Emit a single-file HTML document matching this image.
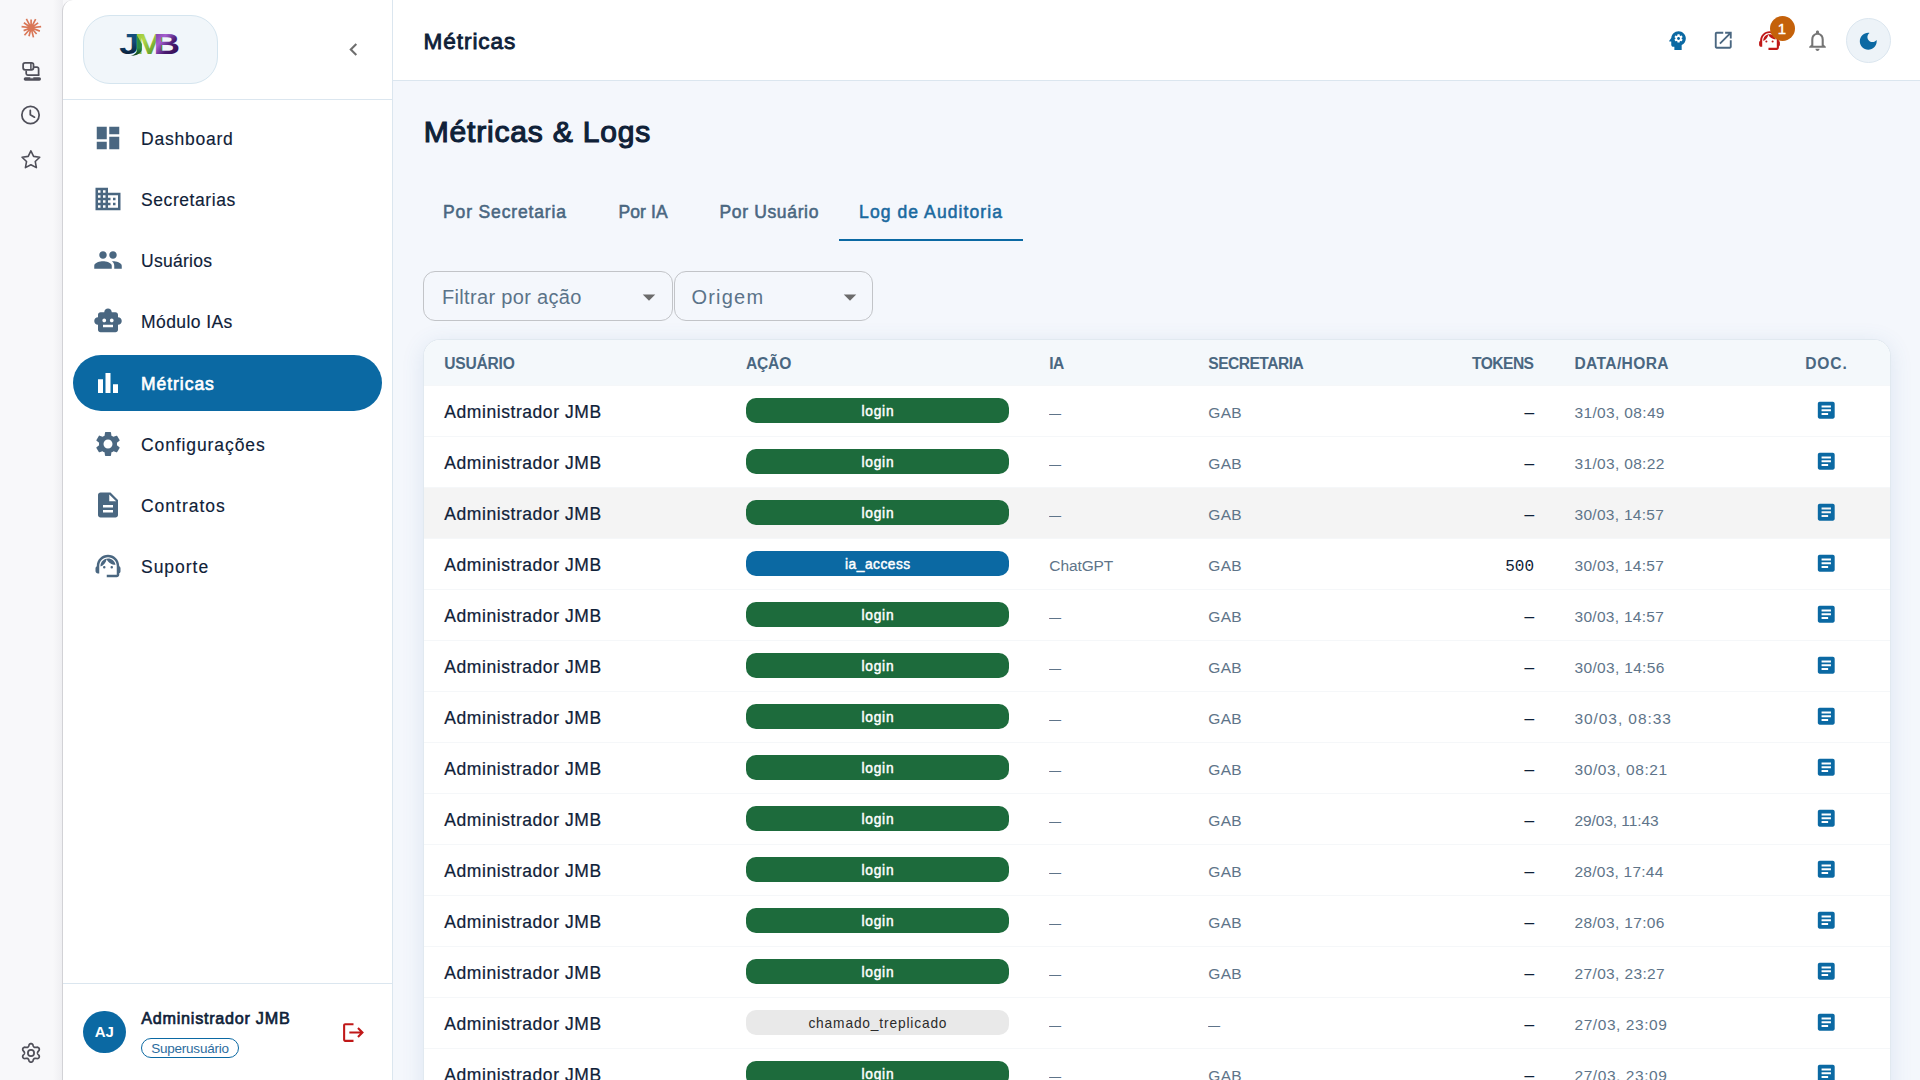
<!DOCTYPE html>
<html lang="pt-BR">
<head>
<meta charset="utf-8">
<title>Métricas</title>
<style>
*{box-sizing:border-box;margin:0;padding:0}
html,body{width:1920px;height:1080px;overflow:hidden;background:#f8f8fa;font-family:"Liberation Sans",sans-serif;color:#0f2138}
.ic{display:block;flex:none}
/* far-left strip */
#strip{position:absolute;left:0;top:0;width:63px;height:1080px;background:linear-gradient(90deg,#f8f8fa 0,#f8f8fa 53px,#efeff2 62px)}
#strip .si{position:absolute}
/* sidebar */
#side{position:absolute;left:62px;top:0;width:331px;height:1080px;background:#fff;border-left:1px solid #d2d2d6;border-right:1px solid #dbe6ef;border-top-left-radius:11px}
#shead{position:absolute;left:0;top:0;right:0;height:100px;border-bottom:1px solid #dbe6ef}
#logo{position:absolute;left:20px;top:15px;width:135px;height:68.500px;border-radius:27px;background:#f1f6fa;border:1px solid #d5e5ef}
#chev{position:absolute;left:278.100px;top:37px}
#nav{position:absolute;left:10px;top:0;width:309px}
.ni{position:absolute;left:0;width:309px;height:56px;border-radius:28px;display:flex;align-items:center;padding-left:20px;font-size:17.500px;color:#0f2138}
.ni span{margin-left:18px;position:relative;top:1.100px;-webkit-text-stroke:.15px currentColor}
.ni.act{background:#0b69a3;color:#fff}
.ni.act span{-webkit-text-stroke:.65px #fff}
#sfoot{position:absolute;left:0;right:0;top:983px;height:97px;border-top:1px solid #dbe6ef}
#avatar{position:absolute;left:20px;top:26.600px;width:42.500px;height:42.500px;border-radius:50%;background:#0b69a3;color:#fff;font-weight:700;font-size:15px;display:flex;align-items:center;justify-content:center}
#uname{position:absolute;left:78.300px;top:24px;font-size:16.200px;line-height:20px;font-weight:400;-webkit-text-stroke:.65px #0f2138;letter-spacing:.73px;color:#0f2138;white-space:nowrap}
#ubadge{position:absolute;left:78px;top:54px;height:20px;width:98px;border:1px solid #0b69a3;border-radius:10px;color:#2b6c9e;font-size:13.500px;line-height:19px;text-align:center;letter-spacing:-.23px}
#logout{position:absolute;left:278px;top:35.800px}
/* top bar */
#top{position:absolute;left:393px;top:0;width:1527px;height:81px;background:#fff;border-bottom:1px solid #dbe6ef}
#top h2{position:absolute;left:30.400px;top:26.700px;font-size:22.600px;line-height:30px;font-weight:400;-webkit-text-stroke:.85px #0f2138;color:#0f2138;letter-spacing:.95px}
#top .ti{position:absolute}
#moon{position:absolute;left:1453px;top:18.300px;width:45px;height:45px;border-radius:50%;background:#edf3f8;border:1px solid #dbe6ef;display:flex;align-items:center;justify-content:center}
#badge{position:absolute;left:1377px;top:16px;width:25px;height:25px;border-radius:50%;background:#c4610a;color:#fff;font-size:15px;line-height:26px;text-align:center;-webkit-text-stroke:.4px #fff;text-indent:-1px}
/* main */
#main{position:absolute;left:393px;top:81px;width:1527px;height:999px;background:#f4f7fc;overflow:hidden}
h1{position:absolute;left:30.700px;top:30.600px;font-size:30px;line-height:40px;font-weight:400;-webkit-text-stroke:1.150px #0f2138;color:#0f2138;white-space:nowrap;letter-spacing:.82px}
#tabs{position:absolute;left:30px;top:100px;height:60px;display:flex}
.tab{height:60px;padding:0 20px;min-width:112.500px;display:flex;align-items:center;justify-content:center;font-size:17.500px;font-weight:400;-webkit-text-stroke:.55px currentColor;color:#4a6781;white-space:nowrap;border-bottom:2.500px solid transparent}
#t1{letter-spacing:.86px}#t2{letter-spacing:.15px}#t3{letter-spacing:.66px}#t4{letter-spacing:1.09px}
.tab span{position:relative;top:2px}
.tab.on{color:#1b6a9f;border-bottom-color:#0b69a3}
.sel{position:absolute;top:190px;height:50px;border:1px solid #c2c4c8;border-radius:12px;font-size:20px;color:#5b7389;display:flex;align-items:center;padding-left:18px;letter-spacing:.33px}
.sel svg{position:absolute;right:7.300px;top:9.500px}
.sel span{position:relative;top:1.300px}
#card{position:absolute;left:30px;top:258px;width:1468px;height:760px;background:#fff;border:1px solid #e1e9f0;border-radius:17px 17px 0 0;box-shadow:0 4px 22px rgba(60,110,170,.13);overflow:hidden}
.th,.tr{display:flex;align-items:center;position:relative}
.th{height:45px;background:#f4f8fb;font-size:15.600px;font-weight:700;color:#4a6781}
.tr{height:51px;border-top:1px solid #f5f7f9;font-size:15.500px;color:#5e7489;letter-spacing:.3px}
.tr.hov{background:#f4f4f4}
.th>div,.tr>div{position:absolute;white-space:nowrap}
.c1{left:20.300px}.c2{left:322px}.c3{left:625.300px}.c4{left:784.300px}.c5{right:356px;text-align:right}.c6{left:1150.500px}.c7{left:1381px;width:42px;text-align:center;display:flex;justify-content:center}
.tr .c2{transform:translateY(-1px)}.tr .c7{transform:translateY(-1px)}.tr .c3,.tr .c4,.tr .c6{transform:translateY(2.300px)}.tr .c5{transform:translateY(2.600px)}.th>div{transform:translateY(1px)}
.tr .c1{transform:translateY(.6px);font-size:17.500px;color:#0f2138;font-weight:400;-webkit-text-stroke:.22px #0f2138;letter-spacing:.56px}
.tr .tok{color:#0f2138;font-family:"Liberation Mono",monospace;font-size:16px;letter-spacing:0}
.d{display:inline-block;transform:scaleX(.78);transform-origin:left center;position:relative;top:0px}
.chip{display:block;width:263px;height:25px;border-radius:10px;text-align:center;font-size:13.750px;line-height:27px;font-weight:400;-webkit-text-stroke:.45px #fff;color:#fff;letter-spacing:.78px;text-indent:.78px}
.chip.g{background:#1d6b3c}.chip.b{background:#0b69a3;letter-spacing:.5px}.chip.n{background:#e9e9e9;color:#2b2b2b;-webkit-text-stroke:0;letter-spacing:.84px}
</style>
</head>
<body>
<div id="strip">
<svg id="stripsvg" width="63" height="1080" viewBox="0 0 63 1080" fill="none" stroke-linecap="round" stroke-linejoin="round">
<path d="M31.10 27.80L41.13 26.59M31.10 27.80L38.18 22.92M31.10 27.80L35.66 19.13M31.10 27.80L31.11 19.60M31.10 27.80L26.37 18.76M31.10 27.80L23.86 22.80M31.10 27.80L21.57 26.63M31.10 27.80L23.62 30.63M31.10 27.80L24.46 35.28M31.10 27.80L29.01 36.25M31.10 27.80L33.46 37.41M31.10 27.80L36.60 34.02M31.10 27.80L39.89 31.14" stroke="#d97757" stroke-width="1.65" stroke-linecap="butt"/>
<circle cx="31.1" cy="27.8" r="2.2" fill="#d97757"/>
<g stroke="#4f4f59" stroke-width="1.75">
<rect x="23.1" y="62.8" width="10.4" height="7" rx="2"/>
<path d="M30.900 63.600v5.400" stroke-width="1.500"/>
<path d="M34.300 67.100h2.700a1.600 1.600 0 0 1 1.600 1.600v6.200"/>
<path d="M26.200 71.400v2.100a1.500 1.500 0 0 0 1.500 1.500h10.900"/>
<path d="M25.400 78.950h13.900" stroke-width="3.400" stroke-linecap="round"/>
<path d="M30.300 77.700h3" stroke="#f8f8fa" stroke-width="1.100" stroke-linecap="butt"/>
<circle cx="30.500" cy="115.050" r="8.650"/>
<path d="M30.300 110.400v4.400l4.200 2.400"/>
<path d="M30.90 150.80 L28.20 156.38 L22.06 157.23 L26.53 161.52 L25.43 167.62 L30.90 164.70 L36.37 167.62 L35.27 161.52 L39.74 157.23 L33.60 156.38Z" stroke-width="1.600"/>
<path d="M37.55 1052.90 L37.58 1052.61 L37.65 1052.32 L37.78 1052.01 L37.96 1051.67 L38.20 1051.30 L38.63 1050.86 L39.03 1050.37 L39.20 1049.91 L39.28 1049.47 L39.27 1049.05 L39.18 1048.64 L39.01 1048.28 L38.77 1047.95 L38.47 1047.67 L38.11 1047.45 L37.69 1047.29 L37.21 1047.21 L36.59 1047.31 L35.98 1047.46 L35.54 1047.48 L35.16 1047.47 L34.83 1047.43 L34.54 1047.35 L34.27 1047.23 L34.04 1047.06 L33.82 1046.85 L33.62 1046.58 L33.42 1046.26 L33.22 1045.87 L33.04 1045.27 L32.82 1044.68 L32.52 1044.30 L32.17 1044.02 L31.79 1043.81 L31.40 1043.69 L31.00 1043.65 L30.60 1043.69 L30.21 1043.81 L29.83 1044.02 L29.48 1044.30 L29.18 1044.68 L28.96 1045.27 L28.78 1045.87 L28.58 1046.26 L28.38 1046.58 L28.18 1046.85 L27.96 1047.06 L27.73 1047.23 L27.46 1047.35 L27.17 1047.43 L26.84 1047.47 L26.46 1047.48 L26.02 1047.46 L25.41 1047.31 L24.79 1047.21 L24.31 1047.29 L23.89 1047.45 L23.53 1047.67 L23.23 1047.95 L22.99 1048.28 L22.82 1048.64 L22.73 1049.05 L22.72 1049.47 L22.80 1049.91 L22.97 1050.37 L23.37 1050.86 L23.80 1051.30 L24.04 1051.67 L24.22 1052.01 L24.35 1052.32 L24.42 1052.61 L24.45 1052.90 L24.42 1053.19 L24.35 1053.48 L24.22 1053.79 L24.04 1054.13 L23.80 1054.50 L23.37 1054.94 L22.97 1055.43 L22.80 1055.89 L22.72 1056.33 L22.73 1056.75 L22.82 1057.16 L22.99 1057.53 L23.23 1057.85 L23.53 1058.13 L23.89 1058.35 L24.31 1058.51 L24.79 1058.59 L25.41 1058.49 L26.02 1058.34 L26.46 1058.32 L26.84 1058.33 L27.17 1058.37 L27.46 1058.45 L27.72 1058.57 L27.96 1058.74 L28.18 1058.95 L28.38 1059.22 L28.58 1059.54 L28.78 1059.93 L28.96 1060.53 L29.18 1061.12 L29.48 1061.50 L29.83 1061.78 L30.21 1061.99 L30.60 1062.11 L31.00 1062.15 L31.40 1062.11 L31.79 1061.99 L32.17 1061.78 L32.52 1061.50 L32.82 1061.12 L33.04 1060.53 L33.22 1059.93 L33.42 1059.54 L33.62 1059.22 L33.82 1058.95 L34.04 1058.74 L34.27 1058.57 L34.54 1058.45 L34.83 1058.37 L35.16 1058.33 L35.54 1058.32 L35.98 1058.34 L36.59 1058.49 L37.21 1058.59 L37.69 1058.51 L38.11 1058.35 L38.47 1058.13 L38.77 1057.85 L39.01 1057.53 L39.18 1057.16 L39.27 1056.75 L39.28 1056.33 L39.20 1055.89 L39.03 1055.43 L38.63 1054.94 L38.20 1054.50 L37.96 1054.13 L37.78 1053.79 L37.65 1053.48 L37.58 1053.19Z"/>
<circle cx="31" cy="1052.900" r="3.100"/>
</g>
</svg>
</div>
<div id="side">
  <div id="shead">
    <div id="logo">
      <svg width="133" height="66" viewBox="0 0 133 66" style="display:block">
        <defs>
          <linearGradient id="gj" x1="0" y1="0" x2="0" y2="1"><stop offset="0" stop-color="#16527f"/><stop offset=".45" stop-color="#134a78"/><stop offset=".8" stop-color="#0b2440"/><stop offset="1" stop-color="#06162a"/></linearGradient>
          <linearGradient id="gm" x1="0" y1="0" x2="1" y2="1"><stop offset="0" stop-color="#86b92f"/><stop offset=".35" stop-color="#b3d84a"/><stop offset=".7" stop-color="#5f9f2a"/><stop offset="1" stop-color="#2f6d23"/></linearGradient>
          <linearGradient id="gs" x1="0" y1="0" x2="0" y2="1"><stop offset="0" stop-color="#2f8a3a"/><stop offset=".6" stop-color="#2a8a45"/><stop offset="1" stop-color="#0f3d1c"/></linearGradient>
          <linearGradient id="gb" x1="0" y1="0" x2="1" y2="1"><stop offset="0" stop-color="#6a2c91"/><stop offset=".35" stop-color="#a55fd0"/><stop offset=".6" stop-color="#4a1a70"/><stop offset="1" stop-color="#26093f"/></linearGradient>
        </defs>
        <g font-family="Liberation Sans, sans-serif" font-weight="700" font-size="29.800">
          <text transform="translate(35.300 37.750) scale(1.215 1)" fill="url(#gj)">J</text>
          <text transform="translate(50.500 37.750) scale(1.215 1)" fill="url(#gm)">M</text>
          <path d="M53.100 19.500L57.900 28v5c0 4-4.800 6.600-11.200 6.900c4.300-1.300 6.400-3.300 6.400-6.900z" fill="url(#gs)"/>
          <text transform="translate(69.500 37.750) scale(1.235 1)" fill="url(#gb)">B</text>
        </g>
      </svg>
    </div>
    <div id="chev"><svg class="ic" width="25" height="25" viewBox="0 0 24 24" fill="#6e6e6e" ><path d="M15.41 7.41L14 6l-6 6 6 6 1.410-1.410L10.830 12z"/></svg></div>
  </div>
  <div id="nav">
<div class="ni" style="top:110px"><svg class="ic" width="30" height="30" viewBox="0 0 24 24" fill="#4a6781" ><path d="M3 13h8V3H3v10zm0 8h8v-6H3v6zm10 0h8V11h-8v10zm0-18v6h8V3h-8z"/></svg><span style="letter-spacing:0.78px">Dashboard</span></div>
<div class="ni" style="top:171px"><svg class="ic" width="30" height="30" viewBox="0 0 24 24" fill="#4a6781" ><path d="M12 7V3H2v18h20V7H12zM6 19H4v-2h2v2zm0-4H4v-2h2v2zm0-4H4V9h2v2zm0-4H4V5h2v2zm4 12H8v-2h2v2zm0-4H8v-2h2v2zm0-4H8V9h2v2zm0-4H8V5h2v2zm10 12h-8v-2h2v-2h-2v-2h2v-2h-2V9h8v10zm-2-8h-2v2h2v-2zm0 4h-2v2h2v-2z"/></svg><span style="letter-spacing:0.58px">Secretarias</span></div>
<div class="ni" style="top:232px"><svg class="ic" width="30" height="30" viewBox="0 0 24 24" fill="#4a6781" ><path d="M16 11c1.66 0 2.99-1.34 2.99-3S17.66 5 16 5c-1.66 0-3 1.34-3 3s1.34 3 3 3zm-8 0c1.66 0 2.99-1.34 2.99-3S9.66 5 8 5C6.34 5 5 6.34 5 8s1.34 3 3 3zm0 2c-2.33 0-7 1.17-7 3.5V19h14v-2.5c0-2.33-4.67-3.5-7-3.5zm8 0c-.29 0-.62.02-.97.05 1.16.84 1.97 1.97 1.97 3.45V19h6v-2.5c0-2.33-4.67-3.5-7-3.5z"/></svg><span style="letter-spacing:0.28px">Usuários</span></div>
<div class="ni" style="top:293px"><svg class="ic" width="30" height="30" viewBox="0 0 24 24" fill="#4a6781" ><path d="M20 9V7c0-1.1-.9-2-2-2h-3c0-1.66-1.34-3-3-3S9 3.34 9 5H6c-1.1 0-2 .9-2 2v2c-1.66 0-3 1.34-3 3s1.34 3 3 3v4c0 1.1.9 2 2 2h12c1.1 0 2-.9 2-2v-4c1.66 0 3-1.34 3-3s-1.34-3-3-3zM7.5 11.5c0-.83.67-1.5 1.5-1.5s1.5.67 1.5 1.5S9.83 13 9 13s-1.500-.67-1.500-1.500zM16 17H8v-2h8v2zm-1-4c-.83 0-1.5-.67-1.5-1.500S14.170 10 15 10s1.500.67 1.500 1.500S15.830 13 15 13z"/></svg><span style="letter-spacing:0.41px">Módulo IAs</span></div>
<div class="ni act" style="top:355px"><svg class="ic" width="30" height="30" viewBox="0 0 24 24" fill="#ffffff" ><path d="M4 9h4v11H4zm12 4h4v7h-4zm-6-9h4v16h-4z"/></svg><span style="letter-spacing:0.96px">Métricas</span></div>
<div class="ni" style="top:416px"><svg class="ic" width="30" height="30" viewBox="0 0 24 24" fill="#4a6781" ><path d="M19.14 12.94c.04-.3.06-.61.06-.94 0-.32-.02-.64-.07-.94l2.03-1.58c.18-.14.23-.41.12-.61l-1.92-3.320c-.12-.22-.37-.29-.59-.22l-2.390.96c-.5-.38-1.030-.7-1.620-.94l-.36-2.540c-.04-.24-.24-.41-.48-.41h-3.840c-.24 0-.43.17-.47.41l-.36 2.540c-.59.24-1.130.57-1.620.94l-2.390-.96c-.22-.08-.47 0-.59.22L2.740 8.870c-.12.21-.08.47.12.61l2.030 1.580c-.05.3-.09.63-.09.94s.02.64.07.94l-2.030 1.580c-.18.14-.23.41-.12.61l1.920 3.320c.12.22.37.29.59.22l2.390-.96c.5.38 1.030.7 1.620.94l.36 2.540c.05.24.24.41.48.41h3.840c.24 0 .44-.17.47-.41l.36-2.540c.59-.24 1.130-.56 1.620-.94l2.390.96c.22.08.47 0 .59-.22l1.920-3.320c.12-.22.07-.47-.12-.61l-2.010-1.580zM12 15.600c-1.980 0-3.600-1.620-3.600-3.600s1.620-3.600 3.600-3.600 3.600 1.620 3.600 3.600-1.620 3.600-3.600 3.600z"/></svg><span style="letter-spacing:0.9px">Configurações</span></div>
<div class="ni" style="top:477px"><svg class="ic" width="30" height="30" viewBox="0 0 24 24" fill="#4a6781" ><path d="M14 2H6c-1.1 0-1.990.9-1.990 2L4 20c0 1.100.89 2 1.990 2H18c1.100 0 2-.9 2-2V8l-6-6zm2 16H8v-2h8v2zm0-4H8v-2h8v2zm-3-5V3.500L18.500 9H13z"/></svg><span style="letter-spacing:0.98px">Contratos</span></div>
<div class="ni" style="top:538px"><svg class="ic" width="30" height="30" viewBox="0 0 24 24" fill="#4a6781" ><path d="M21 12.22C21 6.73 16.74 3 12 3c-4.69 0-9 3.650-9 9.280-.6.34-1 .98-1 1.720v2c0 1.100.9 2 2 2h1v-6.100c0-3.870 3.130-7 7-7s7 3.130 7 7V19h-8v2h8c1.100 0 2-.9 2-2v-1.220c.59-.31 1-.92 1-1.640v-2.300c0-.7-.41-1.310-1-1.620z M9 12a1 1 0 1 0 0 2a1 1 0 1 0 0-2z M15 12a1 1 0 1 0 0 2a1 1 0 1 0 0-2z M18 11.030C17.520 8.180 15.040 6 12.050 6c-3.030 0-6.290 2.510-6.030 6.450 2.470-1.010 4.330-3.210 4.860-5.890 1.310 2.630 4 4.440 7.120 4.470z"/></svg><span style="letter-spacing:0.97px">Suporte</span></div>

  </div>
  <div id="sfoot">
    <div id="avatar">AJ</div>
    <div id="uname">Administrador JMB</div>
    <div id="ubadge">Superusuário</div>
    <div id="logout"><svg class="ic" width="25" height="25" viewBox="0 0 24 24" fill="#c01818" ><path d="M17 7l-1.41 1.41L18.17 11H8v2h10.170l-2.580 2.580L17 17l5-5zM4 5h8V3H4c-1.100 0-2 .9-2 2v14c0 1.100.9 2 2 2h8v-2H4V5z"/></svg></div>
  </div>
</div>
<div id="top">
  <h2>Métricas</h2>
  <div class="ti" style="left:1272px;top:28px"><svg class="ic" width="25" height="25" viewBox="0 0 24 24" fill="#0b69a3" ><path d="M13 8.570c-.79 0-1.430.64-1.430 1.430s.64 1.430 1.430 1.430 1.430-.64 1.430-1.430-.64-1.430-1.430-1.430z M13 3C9.250 3 6.200 5.940 6.020 9.640L4.100 12.200c-.25.33-.01.8.4.8H6v3c0 1.100.9 2 2 2h1v3h7v-4.680c2.360-1.120 4-3.530 4-6.320 0-3.870-3.130-7-7-7zm3 7c0 .13-.01.26-.02.39l.83.66c.08.06.1.16.05.25l-.8 1.390c-.05.09-.16.12-.24.09l-.99-.4c-.21.16-.43.29-.67.39L14 13.830c-.01.1-.1.17-.2.17h-1.600c-.1 0-.18-.07-.2-.17l-.15-1.060c-.25-.1-.47-.23-.68-.39l-.99.4c-.09.03-.2 0-.25-.09l-.8-1.390c-.05-.08-.03-.19.05-.25l.84-.66c-.01-.13-.02-.26-.02-.39s.02-.27.04-.39l-.85-.66c-.08-.06-.1-.16-.05-.26l.8-1.380c.05-.09.15-.12.24-.09l1 .4c.2-.15.43-.29.67-.39L12 6.170c.02-.1.1-.17.2-.17h1.600c.1 0 .18.07.2.17l.15 1.060c.24.1.46.23.67.39l1-.4c.09-.03.2 0 .24.09l.8 1.380c.05.09.03.2-.05.26l-.85.66c.03.12.04.25.04.39z"/></svg></div>
  <div class="ti" style="left:1319.250px;top:29px"><svg class="ic" width="22.5" height="22.5" viewBox="0 0 24 24" fill="#4a6781" ><path d="M19 19H5V5h7V3H5c-1.110 0-2 .9-2 2v14c0 1.100.89 2 2 2h14c1.100 0 2-.9 2-2v-7h-2v7zM14 3v2h3.590l-9.830 9.830 1.410 1.410L19 6.410V10h2V3h-7z"/></svg></div>
  <div class="ti" style="left:1363.850px;top:28.100px"><svg class="ic" width="25" height="25" viewBox="0 0 24 24" fill="#c01818" ><path d="M21 12.22C21 6.73 16.74 3 12 3c-4.69 0-9 3.650-9 9.280-.6.34-1 .98-1 1.720v2c0 1.100.9 2 2 2h1v-6.100c0-3.870 3.130-7 7-7s7 3.130 7 7V19h-8v2h8c1.100 0 2-.9 2-2v-1.220c.59-.31 1-.92 1-1.640v-2.300c0-.7-.41-1.310-1-1.620z M9 12a1 1 0 1 0 0 2a1 1 0 1 0 0-2z M15 12a1 1 0 1 0 0 2a1 1 0 1 0 0-2z M18 11.030C17.520 8.180 15.040 6 12.050 6c-3.030 0-6.290 2.510-6.030 6.450 2.470-1.010 4.330-3.210 4.860-5.890 1.310 2.630 4 4.440 7.120 4.470z"/></svg></div>
  <div id="badge">1</div>
  <div class="ti" style="left:1412.200px;top:27.700px"><svg class="ic" width="25" height="25" viewBox="0 0 24 24" fill="#757575" ><path d="M12 22c1.1 0 2-.9 2-2h-4c0 1.100.89 2 2 2zm6-6v-5c0-3.070-1.640-5.640-4.500-6.320V4c0-.83-.67-1.500-1.500-1.500s-1.500.67-1.500 1.500v.68C7.630 5.360 6 7.920 6 11v5l-2 2v1h16v-1l-2-2zm-2 1H8v-6c0-2.480 1.510-4.500 4-4.500s4 2.020 4 4.500v6z"/></svg></div>
  <div id="moon"><svg class="ic" width="22.5" height="22.5" viewBox="0 0 24 24" fill="#0b69a3" ><path d="M12 3c-4.970 0-9 4.030-9 9s4.030 9 9 9 9-4.030 9-9c0-.46-.04-.92-.1-1.360-.98 1.370-2.580 2.260-4.400 2.260-2.980 0-5.400-2.420-5.400-5.400 0-1.810.89-3.420 2.260-4.400-.44-.06-.9-.1-1.360-.1z"/></svg></div>
</div>
<div id="main">
  <h1>Métricas &amp; Logs</h1>
  <div id="tabs">
    <div class="tab" id="t1"><span>Por Secretaria</span></div><div class="tab" id="t2"><span>Por IA</span></div><div class="tab" id="t3"><span>Por Usuário</span></div><div class="tab on" id="t4"><span>Log de Auditoria</span></div>
  </div>
  <div class="sel" style="left:30px;width:249.500px"><span>Filtrar por ação</span><svg width="30" height="30" viewBox="0 0 24 24" fill="#6b6b6b"><path d="M7 10l5 5 5-5z"/></svg></div>
  <div class="sel" style="left:280.500px;width:199.500px"><span style="letter-spacing:1.200px;margin-left:-1px">Origem</span><svg width="30" height="30" viewBox="0 0 24 24" fill="#6b6b6b"><path d="M7 10l5 5 5-5z"/></svg></div>
  <div id="card">
    <div class="th"><div class="c1" style="letter-spacing:-.23px">USUÁRIO</div><div class="c2" style="letter-spacing:-.2px">AÇÃO</div><div class="c3" style="letter-spacing:-.7px">IA</div><div class="c4" style="letter-spacing:-.53px">SECRETARIA</div><div class="c5" style="letter-spacing:-.56px;margin-right:.56px">TOKENS</div><div class="c6" style="letter-spacing:.35px">DATA/HORA</div><div class="c7" style="letter-spacing:.83px;text-indent:.83px">DOC.</div></div>
<div class="tr"><div class="c1">Administrador JMB</div><div class="c2"><span class="chip g">login</span></div><div class="c3"><span class="d">—</span></div><div class="c4">GAB</div><div class="c5 tok">—</div><div class="c6" style="letter-spacing:0.345px">31/03, 08:49</div><div class="c7"><svg class="ic" width="22.5" height="22.5" viewBox="0 0 24 24" fill="#0b69a3" ><path d="M19 3H5c-1.1 0-2 .9-2 2v14c0 1.100.9 2 2 2h14c1.100 0 2-.9 2-2V5c0-1.100-.9-2-2-2zm-5 14H7v-2h7v2zm3-4H7v-2h10v2zm0-4H7V7h10v2z"/></svg></div></div>
<div class="tr"><div class="c1">Administrador JMB</div><div class="c2"><span class="chip g">login</span></div><div class="c3"><span class="d">—</span></div><div class="c4">GAB</div><div class="c5 tok">—</div><div class="c6" style="letter-spacing:0.33px">31/03, 08:22</div><div class="c7"><svg class="ic" width="22.5" height="22.5" viewBox="0 0 24 24" fill="#0b69a3" ><path d="M19 3H5c-1.1 0-2 .9-2 2v14c0 1.100.9 2 2 2h14c1.100 0 2-.9 2-2V5c0-1.100-.9-2-2-2zm-5 14H7v-2h7v2zm3-4H7v-2h10v2zm0-4H7V7h10v2z"/></svg></div></div>
<div class="tr hov"><div class="c1">Administrador JMB</div><div class="c2"><span class="chip g">login</span></div><div class="c3"><span class="d">—</span></div><div class="c4">GAB</div><div class="c5 tok">—</div><div class="c6" style="letter-spacing:0.29px">30/03, 14:57</div><div class="c7"><svg class="ic" width="22.5" height="22.5" viewBox="0 0 24 24" fill="#0b69a3" ><path d="M19 3H5c-1.1 0-2 .9-2 2v14c0 1.100.9 2 2 2h14c1.100 0 2-.9 2-2V5c0-1.100-.9-2-2-2zm-5 14H7v-2h7v2zm3-4H7v-2h10v2zm0-4H7V7h10v2z"/></svg></div></div>
<div class="tr"><div class="c1">Administrador JMB</div><div class="c2"><span class="chip b">ia_access</span></div><div class="c3" style="letter-spacing:-.1px">ChatGPT</div><div class="c4">GAB</div><div class="c5 tok">500</div><div class="c6" style="letter-spacing:0.29px">30/03, 14:57</div><div class="c7"><svg class="ic" width="22.5" height="22.5" viewBox="0 0 24 24" fill="#0b69a3" ><path d="M19 3H5c-1.1 0-2 .9-2 2v14c0 1.100.9 2 2 2h14c1.100 0 2-.9 2-2V5c0-1.100-.9-2-2-2zm-5 14H7v-2h7v2zm3-4H7v-2h10v2zm0-4H7V7h10v2z"/></svg></div></div>
<div class="tr"><div class="c1">Administrador JMB</div><div class="c2"><span class="chip g">login</span></div><div class="c3"><span class="d">—</span></div><div class="c4">GAB</div><div class="c5 tok">—</div><div class="c6" style="letter-spacing:0.29px">30/03, 14:57</div><div class="c7"><svg class="ic" width="22.5" height="22.5" viewBox="0 0 24 24" fill="#0b69a3" ><path d="M19 3H5c-1.1 0-2 .9-2 2v14c0 1.100.9 2 2 2h14c1.100 0 2-.9 2-2V5c0-1.100-.9-2-2-2zm-5 14H7v-2h7v2zm3-4H7v-2h10v2zm0-4H7V7h10v2z"/></svg></div></div>
<div class="tr"><div class="c1">Administrador JMB</div><div class="c2"><span class="chip g">login</span></div><div class="c3"><span class="d">—</span></div><div class="c4">GAB</div><div class="c5 tok">—</div><div class="c6" style="letter-spacing:0.33px">30/03, 14:56</div><div class="c7"><svg class="ic" width="22.5" height="22.5" viewBox="0 0 24 24" fill="#0b69a3" ><path d="M19 3H5c-1.1 0-2 .9-2 2v14c0 1.100.9 2 2 2h14c1.100 0 2-.9 2-2V5c0-1.100-.9-2-2-2zm-5 14H7v-2h7v2zm3-4H7v-2h10v2zm0-4H7V7h10v2z"/></svg></div></div>
<div class="tr"><div class="c1">Administrador JMB</div><div class="c2"><span class="chip g">login</span></div><div class="c3"><span class="d">—</span></div><div class="c4">GAB</div><div class="c5 tok">—</div><div class="c6" style="letter-spacing:0.92px">30/03, 08:33</div><div class="c7"><svg class="ic" width="22.5" height="22.5" viewBox="0 0 24 24" fill="#0b69a3" ><path d="M19 3H5c-1.1 0-2 .9-2 2v14c0 1.100.9 2 2 2h14c1.100 0 2-.9 2-2V5c0-1.100-.9-2-2-2zm-5 14H7v-2h7v2zm3-4H7v-2h10v2zm0-4H7V7h10v2z"/></svg></div></div>
<div class="tr"><div class="c1">Administrador JMB</div><div class="c2"><span class="chip g">login</span></div><div class="c3"><span class="d">—</span></div><div class="c4">GAB</div><div class="c5 tok">—</div><div class="c6" style="letter-spacing:0.59px">30/03, 08:21</div><div class="c7"><svg class="ic" width="22.5" height="22.5" viewBox="0 0 24 24" fill="#0b69a3" ><path d="M19 3H5c-1.1 0-2 .9-2 2v14c0 1.100.9 2 2 2h14c1.100 0 2-.9 2-2V5c0-1.100-.9-2-2-2zm-5 14H7v-2h7v2zm3-4H7v-2h10v2zm0-4H7V7h10v2z"/></svg></div></div>
<div class="tr"><div class="c1">Administrador JMB</div><div class="c2"><span class="chip g">login</span></div><div class="c3"><span class="d">—</span></div><div class="c4">GAB</div><div class="c5 tok">—</div><div class="c6" style="letter-spacing:-0.09px">29/03, 11:43</div><div class="c7"><svg class="ic" width="22.5" height="22.5" viewBox="0 0 24 24" fill="#0b69a3" ><path d="M19 3H5c-1.1 0-2 .9-2 2v14c0 1.100.9 2 2 2h14c1.100 0 2-.9 2-2V5c0-1.100-.9-2-2-2zm-5 14H7v-2h7v2zm3-4H7v-2h10v2zm0-4H7V7h10v2z"/></svg></div></div>
<div class="tr"><div class="c1">Administrador JMB</div><div class="c2"><span class="chip g">login</span></div><div class="c3"><span class="d">—</span></div><div class="c4">GAB</div><div class="c5 tok">—</div><div class="c6" style="letter-spacing:0.24px">28/03, 17:44</div><div class="c7"><svg class="ic" width="22.5" height="22.5" viewBox="0 0 24 24" fill="#0b69a3" ><path d="M19 3H5c-1.1 0-2 .9-2 2v14c0 1.100.9 2 2 2h14c1.100 0 2-.9 2-2V5c0-1.100-.9-2-2-2zm-5 14H7v-2h7v2zm3-4H7v-2h10v2zm0-4H7V7h10v2z"/></svg></div></div>
<div class="tr"><div class="c1">Administrador JMB</div><div class="c2"><span class="chip g">login</span></div><div class="c3"><span class="d">—</span></div><div class="c4">GAB</div><div class="c5 tok">—</div><div class="c6" style="letter-spacing:0.34px">28/03, 17:06</div><div class="c7"><svg class="ic" width="22.5" height="22.5" viewBox="0 0 24 24" fill="#0b69a3" ><path d="M19 3H5c-1.1 0-2 .9-2 2v14c0 1.100.9 2 2 2h14c1.100 0 2-.9 2-2V5c0-1.100-.9-2-2-2zm-5 14H7v-2h7v2zm3-4H7v-2h10v2zm0-4H7V7h10v2z"/></svg></div></div>
<div class="tr"><div class="c1">Administrador JMB</div><div class="c2"><span class="chip g">login</span></div><div class="c3"><span class="d">—</span></div><div class="c4">GAB</div><div class="c5 tok">—</div><div class="c6" style="letter-spacing:0.36px">27/03, 23:27</div><div class="c7"><svg class="ic" width="22.5" height="22.5" viewBox="0 0 24 24" fill="#0b69a3" ><path d="M19 3H5c-1.1 0-2 .9-2 2v14c0 1.100.9 2 2 2h14c1.100 0 2-.9 2-2V5c0-1.100-.9-2-2-2zm-5 14H7v-2h7v2zm3-4H7v-2h10v2zm0-4H7V7h10v2z"/></svg></div></div>
<div class="tr"><div class="c1">Administrador JMB</div><div class="c2"><span class="chip n">chamado_treplicado</span></div><div class="c3"><span class="d">—</span></div><div class="c4"><span class="d">—</span></div><div class="c5 tok">—</div><div class="c6" style="letter-spacing:0.56px">27/03, 23:09</div><div class="c7"><svg class="ic" width="22.5" height="22.5" viewBox="0 0 24 24" fill="#0b69a3" ><path d="M19 3H5c-1.1 0-2 .9-2 2v14c0 1.100.9 2 2 2h14c1.100 0 2-.9 2-2V5c0-1.100-.9-2-2-2zm-5 14H7v-2h7v2zm3-4H7v-2h10v2zm0-4H7V7h10v2z"/></svg></div></div>
<div class="tr"><div class="c1">Administrador JMB</div><div class="c2"><span class="chip g">login</span></div><div class="c3"><span class="d">—</span></div><div class="c4">GAB</div><div class="c5 tok">—</div><div class="c6" style="letter-spacing:0.56px">27/03, 23:09</div><div class="c7"><svg class="ic" width="22.5" height="22.5" viewBox="0 0 24 24" fill="#0b69a3" ><path d="M19 3H5c-1.1 0-2 .9-2 2v14c0 1.100.9 2 2 2h14c1.100 0 2-.9 2-2V5c0-1.100-.9-2-2-2zm-5 14H7v-2h7v2zm3-4H7v-2h10v2zm0-4H7V7h10v2z"/></svg></div></div>

  </div>
</div>
</body>
</html>
